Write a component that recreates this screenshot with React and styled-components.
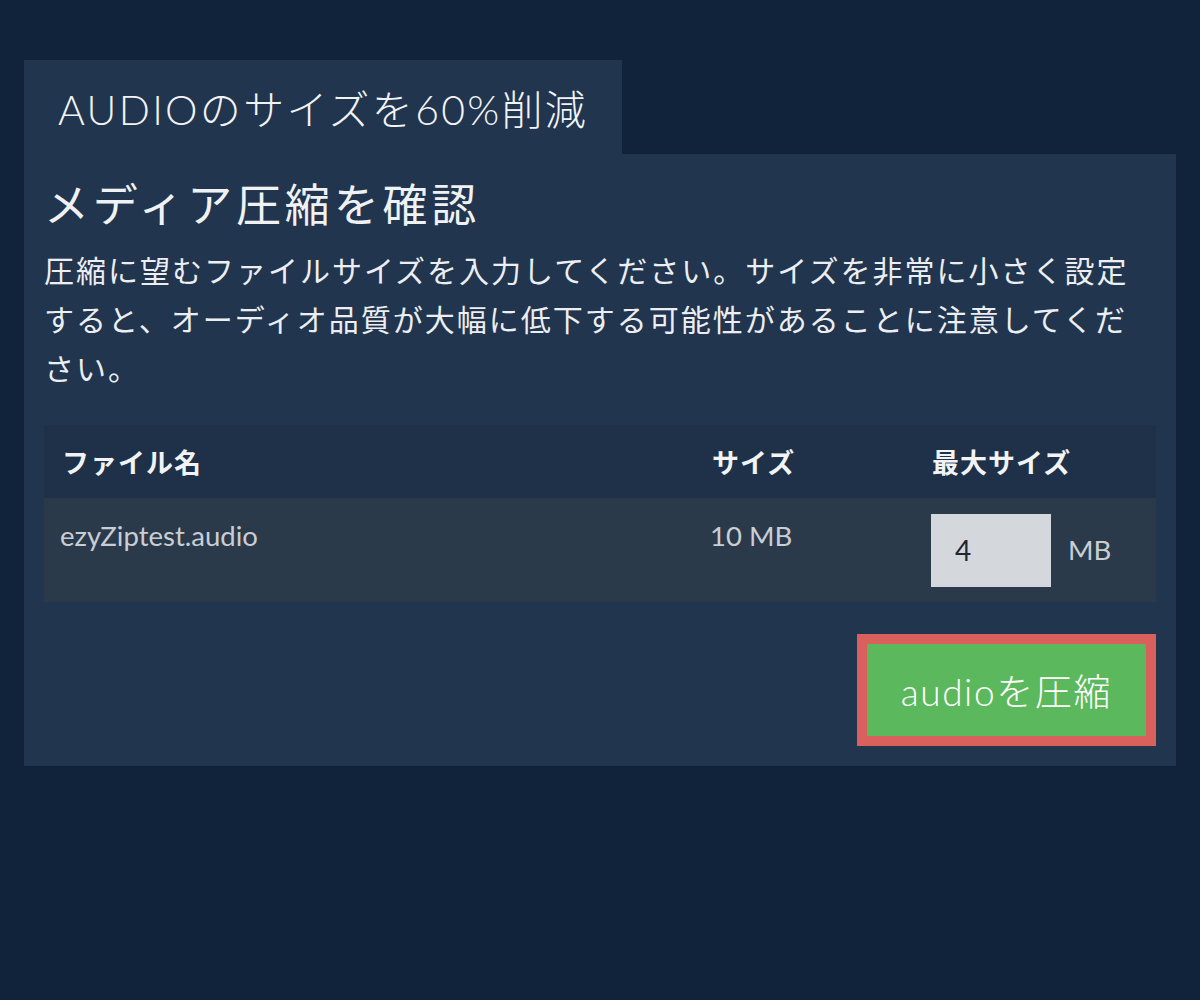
import React from 'react';
import styled, { createGlobalStyle } from 'styled-components';

const GlobalStyle = createGlobalStyle`
  html, body {
    margin: 0;
    padding: 0;
    background: #10233a;
  }

  body {
    font-family: 'Lato', 'Noto Sans CJK JP', sans-serif;
    color: #eef0f2;
  }
`;

const Page = styled.div`
  min-height: 1000px;
  padding: 60px 24px;
  box-sizing: border-box;
`;

const Tab = styled.div`
  display: inline-flex;
  align-items: center;
  height: 94px;
  padding: 0 34px;
  background: #21354e;
  font-size: 41px;
  font-weight: 300;
  letter-spacing: 2.3px;
  color: #f2f3f5;
`;

const Panel = styled.div`
  background: #21354e;
  padding: 24px 20px 20px;
`;

const Title = styled.h2`
  margin: 0 0 14px;
  font-size: 45px;
  font-weight: 400;
  line-height: 54px;
  letter-spacing: 3.8px;
  color: #f0f1f3;
`;

const Notice = styled.p`
  margin: 0 0 32px;
  font-size: 30px;
  line-height: 49px;
  letter-spacing: 2px;
  color: #eceef1;
`;

const Table = styled.div`
  display: grid;
  grid-template-columns: 650px 220px 1fr;
`;

const HeadCell = styled.div`
  display: flex;
  align-items: center;
  height: 73px;
  padding: 0 18px;
  background: #1e3148;
  font-size: 27px;
  font-weight: 700;
  letter-spacing: 1px;
  color: #f2f3f5;
`;

const Cell = styled.div`
  min-height: 104px;
  box-sizing: border-box;
  padding: 20px 16px;
  background: #2b3a4b;
  font-size: 27.5px;
  line-height: 36px;
  color: #c9ced5;
`;

const InputCell = styled(Cell)`
  display: flex;
  align-items: center;
  gap: 17px;
  padding: 15px 17px;
`;

const SizeInput = styled.input`
  width: 120px;
  height: 73px;
  box-sizing: border-box;
  border: none;
  outline: none;
  padding: 0 24px;
  background: #d4d8dd;
  font-family: 'Lato', sans-serif;
  font-size: 28px;
  color: #1f2733;
`;

const Footer = styled.div`
  display: flex;
  justify-content: flex-end;
  margin-top: 32px;
`;

const CompressButton = styled.button`
  height: 112px;
  padding: 0 34px;
  border: 10px solid #d9605c;
  background: #5cb85c;
  font-family: 'Lato', 'Noto Sans CJK JP', sans-serif;
  font-size: 37px;
  font-weight: 300;
  letter-spacing: 1.6px;
  color: #ffffff;
  cursor: pointer;
`;

const App = () => (
  <>
    <GlobalStyle />
    <Page>
      <Tab>AUDIOのサイズを60%削減</Tab>
      <Panel>
        <Title>メディア圧縮を確認</Title>
        <Notice>
          圧縮に望むファイルサイズを入力してください。サイズを非常に小さく設定すると、オーディオ品質が大幅に低下する可能性があることに注意してください。
        </Notice>
        <Table>
          <HeadCell>ファイル名</HeadCell>
          <HeadCell>サイズ</HeadCell>
          <HeadCell>最大サイズ</HeadCell>
          <Cell>ezyZiptest.audio</Cell>
          <Cell>10 MB</Cell>
          <InputCell>
            <SizeInput type="text" defaultValue="4" />
            MB
          </InputCell>
        </Table>
        <Footer>
          <CompressButton>audioを圧縮</CompressButton>
        </Footer>
      </Panel>
    </Page>
  </>
);

export default App;
